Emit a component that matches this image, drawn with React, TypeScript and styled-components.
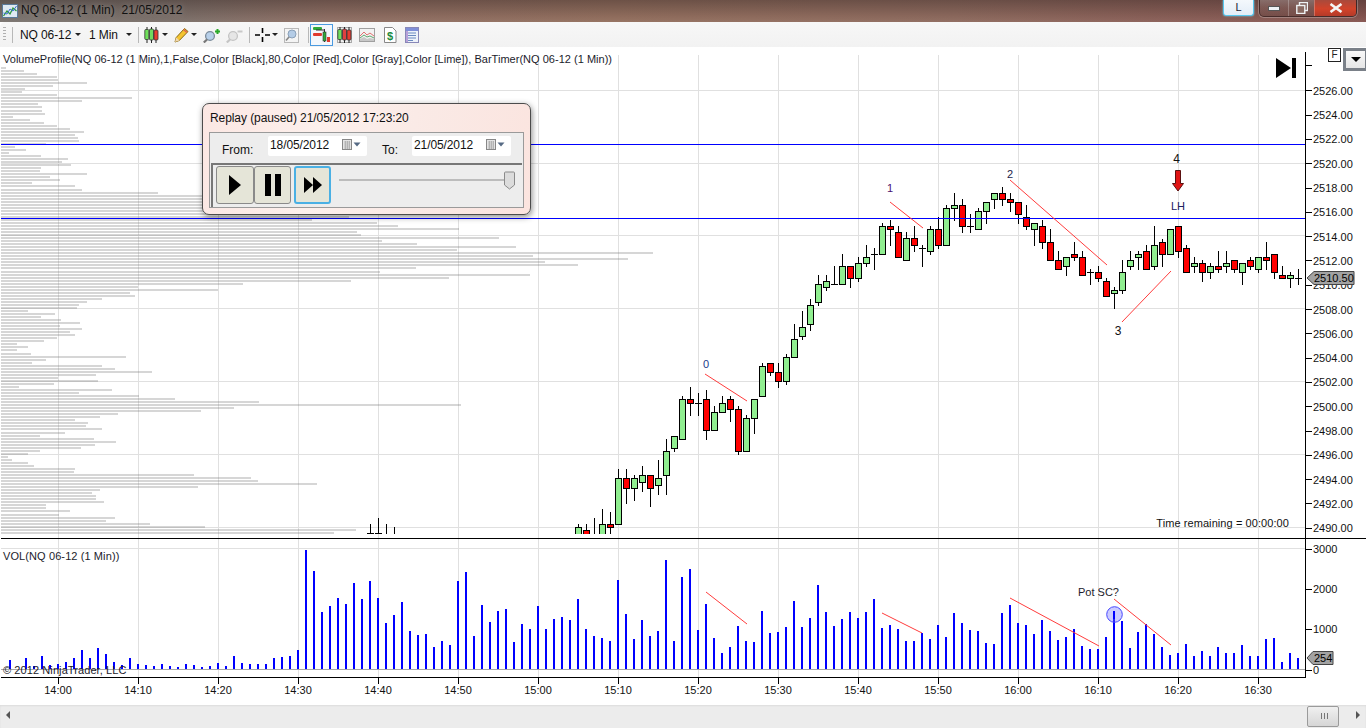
import React from "react";
import styled, { createGlobalStyle } from "styled-components";

const Global = createGlobalStyle`
  html, body { margin: 0; padding: 0; background: #fff; overflow: hidden; }
  #root { width: 1366px; height: 728px; }
  * { box-sizing: border-box; }
`;

const FONT = `"Liberation Sans", Arial, sans-serif`;

/* ---------- data ---------- */
type Candle = [number, number, number, number, number, "g" | "r" | "d"];
const candles: Candle[] = [
  [370,524,533,533,534,"d"],[378,518,533,533,534,"d"],[386,524,534,534,534,"d"],[394,527,534,534,534,"d"],
  [578,524,527,540,540,"g"],[586,524,530,540,540,"r"],[594,518,540,540,540,"d"],[602,509,524,540,540,"g"],
  [610,512,524,527,534,"r"],[618,469,478,524,524,"g"],[626,469,478,488,503,"r"],[634,475,478,488,500,"g"],
  [642,466,475,482,491,"g"],[650,475,475,488,506,"r"],[658,460,478,485,494,"g"],[666,439,451,475,494,"g"],
  [674,436,436,448,451,"g"],[682,396,399,439,439,"g"],[690,387,399,403,415,"r"],[698,393,403,403,415,"d"],
  [706,390,399,430,439,"r"],[714,406,412,430,430,"g"],[722,396,403,412,412,"g"],[730,396,399,409,421,"r"],
  [738,406,409,451,454,"r"],[746,415,418,451,451,"g"],[754,399,399,418,433,"g"],[762,363,366,396,396,"g"],
  [770,363,363,372,375,"r"],[778,363,372,381,387,"r"],[786,354,357,381,384,"g"],[794,324,339,357,357,"g"],
  [802,311,327,336,339,"g"],[810,299,305,324,330,"g"],[818,275,284,302,305,"g"],[826,275,281,287,290,"g"],
  [834,266,284,284,284,"d"],[842,254,266,284,284,"g"],[850,266,266,278,287,"r"],[858,257,263,278,281,"g"],
  [866,245,257,263,266,"g"],[874,248,254,254,269,"d"],[882,223,226,254,254,"g"],[890,220,226,229,245,"r"],
  [898,226,232,257,257,"r"],[906,232,238,260,260,"g"],[914,226,238,245,251,"r"],[922,245,248,248,266,"d"],
  [930,226,229,251,254,"g"],[938,217,229,245,248,"r"],[946,205,208,245,245,"g"],[954,193,205,208,220,"g"],
  [962,199,205,226,232,"r"],[970,214,226,226,232,"d"],[978,208,211,229,229,"g"],[986,202,202,211,223,"g"],
  [994,193,193,199,208,"g"],[1002,187,193,199,205,"r"],[1010,193,199,202,211,"r"],[1018,202,202,214,223,"r"],
  [1026,205,217,226,229,"r"],[1034,223,223,229,245,"g"],[1042,220,226,242,248,"r"],[1050,229,242,260,260,"r"],
  [1058,251,260,269,269,"r"],[1066,257,257,266,275,"g"],[1074,242,254,257,260,"r"],[1082,251,257,275,275,"r"],
  [1090,269,272,272,284,"d"],[1098,266,272,278,281,"r"],[1106,278,281,296,296,"r"],[1114,287,290,293,308,"g"],
  [1122,260,272,290,293,"g"],[1130,251,260,266,269,"g"],[1138,251,254,257,269,"g"],[1146,245,251,269,269,"r"],
  [1154,226,245,266,269,"g"],[1162,239,242,254,266,"r"],[1170,229,229,254,254,"g"],[1178,226,226,251,257,"r"],
  [1186,245,248,272,272,"r"],[1194,257,263,266,272,"g"],[1202,260,263,272,281,"r"],[1210,263,266,272,278,"g"],
  [1218,251,266,269,272,"r"],[1226,251,263,266,272,"g"],[1234,260,260,269,272,"r"],[1242,263,263,272,284,"g"],
  [1250,257,260,266,269,"r"],[1258,257,257,269,272,"g"],[1266,242,257,260,269,"r"],[1274,254,254,272,278,"r"],
  [1282,266,275,278,278,"r"],[1290,272,275,278,287,"g"],[1298,269,278,278,284,"d"],
];

// zoom-3 tops of the volume bars, from x = 10, every 8px; 418 = no bar
const volTops = [
  390,418,384,408,378,405,402,396,384,360,384,354,372,396,405,384,402,405,408,402,408,411,402,405,411,408,399,408,378,399,402,402,402,384,381,378,360,
  60,123,246,228,204,222,159,207,153,204,279,255,216,303,315,312,351,333,345,153,
  126,318,225,276,243,237,336,282,297,228,297,267,261,270,207,297,318,324,333,150,252,327,270,318,303,90,333,141,117,300,222,324,369,351,288,333,336,243,309,306,291,213,291,264,165,246,288,267,246,264,246,207,294,285,297,
  333,333,309,327,285,321,249,279,300,303,339,342,249,225,279,285,312,270,303,330,321,297,348,357,357,321,246,273,354,306,282,312,351,375,369,342,378,363,378,351,369,369,345,378,378,327,324,396,369,384,
];

const profile = [
  5,23,36,56,57,86,52,24,21,56,131,81,37,41,41,44,12,29,43,56,69,83,74,77,78,45,14,25,8,40,67,61,70,40,39,86,49,59,31,74,81,157,
  400,400,400,400,400,400,400,348,311,376,397,458,356,360,498,381,416,515,456,652,532,627,544,577,415,379,529,448,350,242,137,217,129,134,101,
  86,78,76,27,54,40,60,79,59,81,69,74,56,43,16,27,16,30,125,45,31,101,114,151,95,57,97,53,18,111,78,138,174,258,460,233,200,117,99,74,87,85,101,64,39,93,115,94,80,39,27,7,11,27,33,74,73,193,250,257,316,197,99,91,95,95,103,45,45,69,58,114,105,149,204,355,333,
];

const gridXs = Array.from({ length: 16 }, (_, i) => 58 + i * 80);
const timeLabels = ["14:00","14:10","14:20","14:30","14:40","14:50","15:00","15:10","15:20","15:30","15:40","15:50","16:00","16:10","16:20","16:30"];
const priceY = (p: number) => Math.round(90.3 + (2526 - p) * 12.15);
const priceBase = (p: number) => Math.round(94.8 + (2526 - p) * 12.15);
const priceTicks = Array.from({ length: 19 }, (_, i) => 2526 - i * 2);

/* ---------- shell ---------- */
const Page = styled.div`
  width: 1366px; height: 728px; display: flex; flex-direction: column;
  font-family: ${FONT}; background: #fff; color: #111;
`;

const TitleBar = styled.header`
  height: 22px; display: flex; align-items: flex-start; flex: none; padding-left: 2px;
  background:
    linear-gradient(180deg, rgba(50,36,34,.4) 0, rgba(50,36,34,.08) 70%, rgba(255,255,255,.03) 100%),
    linear-gradient(90deg, #7b7570 0, #7b706a 12%, #8f6f64 24%, #94705f 45%, #8f6b5f 70%, #8a5e57 88%, #865550 100%);
`;
const TitleIcon = styled.svg` width: 16px; height: 16px; margin-top: 3px; flex: none; `;
const TitleText = styled.span`
  margin-left: 3px; line-height: 21px; font-size: 12px; color: #111; white-space: pre; letter-spacing: .07px;
  text-shadow: 0 0 6px rgba(255,255,255,.35);
`;
const TitleActions = styled.div` margin-left: auto; display: flex; align-items: flex-start; padding-right: 9px; `;
const ModeButton = styled.div`
  width: 31px; height: 16px; margin-right: 5px; background: linear-gradient(#f4f8fc, #e3edf8);
  border: 1px solid #58c8ee; border-top: none; border-radius: 0 0 3px 3px;
  box-shadow: 0 0 2px #7fdcff; font-size: 11px; line-height: 14px; text-align: center; color: #223;
`;
const WinGroup = styled.div`
  display: flex; height: 17px; border: 1px solid rgba(50,30,30,.75); border-top: none;
  border-radius: 0 0 5px 5px; overflow: hidden; box-shadow: 0 0 0 1px rgba(255,255,255,.25);
`;
const WinBtn = styled.div<{ $w: number; $close?: boolean }>`
  width: ${p => p.$w}px; display: flex; align-items: center; justify-content: center;
  border-left: 1px solid rgba(255,255,255,.25);
  background: ${p => p.$close
    ? "linear-gradient(#a84a3c, #d2432a 55%, #b53a28)"
    : "linear-gradient(rgba(255,255,255,.22), rgba(255,255,255,.06) 50%, rgba(60,40,40,.18))"};
  &:first-child { border-left: none; }
`;

const Toolbar = styled.nav`
  height: 25px; flex: none; display: flex; align-items: center; padding-left: 3px;
  background: linear-gradient(#f7f7f7, #f2f2f2); border-top-left-radius: 5px; font-size: 12px; color: #111;
`;
const Grip = styled.div`
  width: 3px; height: 15px; flex: none;
  background: repeating-linear-gradient(180deg, #b0b0b0 0 1px, transparent 1px 3px);
`;
const Sep = styled.div<{ $before: number; $after: number }>`
  width: 1px; height: 16px; flex: none; background: #b8b8b8;
  margin: 0 ${p => p.$after}px 0 ${p => p.$before}px;
`;
const TbLabel = styled.span<{ $w: number }>`
  width: ${p => p.$w}px; flex: none; white-space: nowrap; letter-spacing: -.1px;
`;
const Caret = styled.i<{ $l: number; $r: number }>`
  width: 0; height: 0; flex: none; margin: 0 ${p => p.$r}px 0 ${p => p.$l}px;
  border-left: 3px solid transparent; border-right: 3px solid transparent; border-top: 3px solid #222;
`;
const ToolIcon = styled.svg<{ $w: number; $r?: number }>`
  width: ${p => p.$w}px; height: 16px; flex: none; margin-right: ${p => p.$r ?? 0}px;
`;
const ActiveTool = styled.div`
  width: 23px; height: 22px; flex: none; display: flex; align-items: center; justify-content: center;
  margin-right: 4px; border: 1px solid #4a9ae0; background: #f3f7fc;
`;

/* ---------- chart ---------- */
const ChartArea = styled.main` position: relative; height: 658px; flex: none; display: flex; flex-direction: column; overflow: hidden; background: #fff; `;
const Panel = styled.svg<{ $h: number }>`
  display: block; width: 1366px; height: ${p => p.$h}px; flex: none; font-family: ${FONT}; font-size: 11px;
`;
const Legend = styled.div<{ $top: number; $sp?: number }>`
  position: absolute; left: 3px; top: ${p => p.$top}px; letter-spacing: ${p => p.$sp ?? 0}px;
  font-size: 11px; line-height: 13px; color: #1c1c2c; white-space: nowrap;
`;
const TimeRemaining = styled.div`
  position: absolute; right: 77px; top: 469px; font-size: 11px; line-height: 14px; color: #111; letter-spacing: .08px; white-space: nowrap;
`;
const FBox = styled.div`
  position: absolute; left: 1328px; top: 1px; width: 13px; height: 14px; border: 1px solid #222;
  background: #fff; font-size: 10px; line-height: 12px; text-align: center; color: #222;
`;
const MenuBtn = styled.div`
  position: absolute; left: 1343px; top: 1px; width: 23px; height: 23px; border: 3px solid #7a8088;
  border-right-width: 1px; background: linear-gradient(#f8f8f8, #e6e6e6); display: flex; justify-content: center; padding-top: 6px;
  &::after { content: ""; width: 0; height: 0; border-left: 5px solid transparent; border-right: 5px solid transparent; border-top: 5px solid #000; }
`;

/* ---------- replay dialog ---------- */
const Dialog = styled.section`
  position: absolute; left: 202px; top: 56px; width: 329px; height: 112px; padding: 6px 6px 6px 6px;
  border: 1px solid #4c4c4c; border-radius: 7px;
  background: linear-gradient(100deg, #fbe7e3 0, #fdf0ec 35%, #faeae6 62%, #fbe4df 100%);
  box-shadow: 1px 2px 6px rgba(0,0,0,.45); display: flex; flex-direction: column;
`;
const DialogTitle = styled.div` height: 22px; padding-left: 1px; font-size: 12px; line-height: 16px; color: #111; white-space: nowrap; letter-spacing: -.08px; `;
const DialogBody = styled.div`
  flex: 1; border: 1px solid #9a9a9a; background: #ededed; display: flex; flex-direction: column; padding: 0 1px;
`;
const DateRow = styled.div` height: 30px; flex: none; display: flex; align-items: flex-start; padding-top: 3px; font-size: 12px; color: #111; `;
const DateLabel = styled.span<{ $w: number; $l: number }>` width: ${p => p.$w}px; margin-left: ${p => p.$l}px; padding-top: 7px; flex: none; `;
const DateField = styled.div`
  width: 99px; height: 20px; background: #fff; border-radius: 2px; display: flex; align-items: center; padding: 0 6px 2px 2px; flex: none;
`;
const DateValue = styled.span` flex: 1; font-size: 12px; letter-spacing: -.1px; `;
const CalIcon = styled.svg` width: 19px; height: 12px; flex: none; `;
const ControlRow = styled.div`
  flex: 1; border-top: 2px solid #777; border-left: 2px solid #777; display: flex; align-items: flex-start; padding: 1px 0 0 3px;
`;
const PlayerBtn = styled.button<{ $w: number; $focus?: boolean; $r?: number }>`
  width: ${p => p.$w}px; height: 38px; flex: none; margin: 0 ${p => p.$r ?? 0}px 0 0; padding: 0;
  display: flex; align-items: center; justify-content: center; background: #e5e5d8; border-radius: 3px;
  border: ${p => p.$focus ? "2px solid #4ab0e4" : "1px solid #8a8a8a"};
`;
const SliderWrap = styled.div` position: relative; width: 176px; height: 38px; margin-left: 8px; flex: none; `;
const SliderTrack = styled.div` position: absolute; left: 0; right: 5px; top: 13px; height: 2px; background: #bcbcbc; `;
const SliderThumb = styled.svg` position: absolute; right: 0; top: 5px; width: 11px; height: 19px; `;

/* ---------- footer ---------- */
const ScrollBar = styled.footer`
  height: 23px; flex: none; display: flex; align-items: center; background: #ececec;
  box-shadow: inset 0 1px 2px rgba(0,0,0,.07); position: relative; padding: 0 6px;
`;
const ArrowL = styled.i` width: 0; height: 0; border-right: 4px solid #555; border-top: 4px solid transparent; border-bottom: 4px solid transparent; margin-top: -4px; `;
const ArrowR = styled.i` width: 0; height: 0; border-left: 4px solid #555; border-top: 4px solid transparent; border-bottom: 4px solid transparent; margin-left: 17px; margin-top: -4px; `;
const Thumb = styled.div`
  margin-left: auto; width: 32px; height: 21px; background: linear-gradient(#f0f0f0, #d6d6d6);
  border: 1px solid #9a9a9a; border-radius: 2px; display: flex; align-items: center; justify-content: center; gap: 2px; margin-top: -1px;
  &::before, &::after { content: ""; width: 1px; height: 6px; background: #777; box-shadow: 3px 0 0 #777; }
`;

/* ---------- chart parts ---------- */
const Grid = ({ top, bottom }: { top: number; bottom: number }) => (
  <g fill="#e0e0e0">{gridXs.map(x => <rect key={x} x={x} y={top} width={1} height={bottom - top} />)}</g>
);

const CandleMark = ({ c }: { c: Candle }) => {
  const [x, top, bt, bb, bot, kind] = c;
  if (kind === "d") {
    return (
      <g fill="#000">
        <rect x={x} y={top} width={1} height={bot - top + 1} />
        <rect x={x - 3} y={bt} width={7} height={1} />
      </g>
    );
  }
  return (
    <g>
      <rect x={x} y={top} width={1} height={bot - top + 1} fill="#000" />
      <rect x={x - 2.5} y={bt + 0.5} width={6} height={bb - bt} fill={kind === "g" ? "#90ee90" : "#ff0000"} stroke="#000" strokeWidth={1} />
    </g>
  );
};

const RedLine = ({ d }: { d: [number, number, number, number] }) => (
  <line x1={d[0]} y1={d[1]} x2={d[2]} y2={d[3]} stroke="#ff3c3c" strokeWidth={1} />
);

const PricePanel = () => (
  <Panel $h={492} viewBox="0 47 1366 492">
    <defs><clipPath id="plot"><rect x="1" y="52" width="1304" height="482" /></clipPath></defs>
    <Grid top={55} bottom={538} />
    <g fill="#e0e0e0">
      {[90, 163, 235, 308, 381, 454, 527].map(y => <rect key={y} x={1} y={y} width={1304} height={1} />)}
    </g>
    <g fill="#787878" fillOpacity={0.3}>
      {profile.map((w, i) => <rect key={i} x={1} y={Math.floor(67.5 + i * 3.0375)} width={w} height={2} />)}
    </g>
    <g clipPath="url(#plot)">{candles.map(c => <CandleMark key={c[0]} c={c} />)}</g>
    <rect x={1} y={144} width={1304} height={1} fill="#0000ff" />
    <rect x={1} y={218} width={1304} height={1} fill="#0000ff" />
    <RedLine d={[705, 374, 747, 401]} />
    <RedLine d={[890, 202, 923, 228]} />
    <RedLine d={[1010, 180, 1107, 265]} />
    <RedLine d={[1122, 322, 1171, 271]} />
    <text x={706} y={368} textAnchor="middle" fill="#1a3a8a" fontSize={11}>0</text>
    <text x={890} y={192} textAnchor="middle" fill="#4a1070" fontSize={11}>1</text>
    <text x={1010} y={178} textAnchor="middle" fill="#22224a" fontSize={11}>2</text>
    <text x={1118} y={335} textAnchor="middle" fill="#111" fontSize={12}>3</text>
    <text x={1176.500} y={163} textAnchor="middle" fill="#111" fontSize={12}>4</text>
    <text x={1178} y={210} textAnchor="middle" fill="#202060" fontSize={11}>LH</text>
    <path d="M1175.5 170.5h5v13h3l-5.5 7.5l-5.5-7.5h3z" fill="#e01414" stroke="#5a1010" />
    <path d="M1276 58v20l15-10z M1292 58h4v20h-4z" fill="#000" />
    <rect x={1305} y={52} width={1} height={486} fill="#000" />
    <rect x={1305} y={65} width={7} height={1} fill="#000" />
    {priceTicks.map(p => (
      <g key={p}>
        <rect x={1305} y={priceY(p)} width={7} height={1} fill="#000" />
        <text x={1313} y={priceBase(p)} fill="#111">{p.toFixed(2)}</text>
      </g>
    ))}
    <path d="M1307 278l7-6.5h40v13h-40z" fill="#a2a2a2" stroke="#444" />
    <text x={1314} y={282} fill="#000" fontSize={11}>2510.50</text>
    <rect x={1} y={538} width={1365} height={1} fill="#000" />
  </Panel>
);

const VolumePanel = () => (
  <Panel $h={166} viewBox="0 539 1366 166">
    <Grid top={539} bottom={677} />
    <rect x={1} y={548} width={1304} height={1} fill="#e0e0e0" />
    <g fill="#0000ff">
      {volTops.map((t, i) => {
        if (t >= 418) return null;
        const top = 530 + t / 3;
        return <rect key={i} x={9 + i * 8} y={top} width={2} height={669 - top} />;
      })}
    </g>
    <rect x={1} y={669} width={1304} height={1} fill="#a8a8a8" />
    <circle cx={1114.5} cy={614.5} r={7.8} fill="#6a6aff" fillOpacity={0.35} stroke="#4848ff" />
    <rect x={1113} y={611} width={2} height={8} fill="#0000ff" />
    <RedLine d={[706, 592, 747, 624]} />
    <RedLine d={[882, 613, 922, 633]} />
    <RedLine d={[1010, 598, 1099, 646]} />
    <RedLine d={[1114, 599, 1171, 645]} />
    <text x={1078} y={596} fill="#1c1c2c">Pot SC?</text>
    <rect x={1} y={677} width={1305} height={1} fill="#000" />
    <rect x={1305} y={539} width={1} height={139} fill="#000" />
    {[[3000, 549], [2000, 589], [1000, 629], [0, 670]].map(([v, y]) => (
      <g key={v}>
        <rect x={1305} y={y} width={7} height={1} fill="#000" />
        <text x={1313} y={y + 4} fill="#111">{v}</text>
      </g>
    ))}
    <path d="M1307 658l6-6.5h20v13h-20z" fill="#a2a2a2" stroke="#444" />
    <text x={1314} y={662} fill="#000" fontSize={11}>254</text>
    {gridXs.map((x, i) => (
      <g key={x}>
        <rect x={x} y={678} width={1} height={6} fill="#000" />
        <text x={x} y={694} textAnchor="middle" fill="#111">{timeLabels[i]}</text>
      </g>
    ))}
  </Panel>
);

const Cal = () => (
  <CalIcon viewBox="0 0 19 12">
    <rect x=".5" y=".5" width="9" height="10" fill="#e4e4e4" stroke="#888" />
    <path d="M2 3h6M2 5h6M2 7h6M2 9h6M3.5 2v8M5.5 2v8M7.5 2v8" stroke="#a8a8a8" strokeWidth=".7" />
    <path d="M11.5 3.5h7l-3.5 4z" fill="#566a84" />
  </CalIcon>
);

const CandleIcon = ({ dark }: { dark?: boolean }) => (
  <>
    <path d="M3 0v16M7.5 0v16M12 0v16" stroke="#222" strokeWidth={1} />
    <rect x=".8" y="2.5" width="4" height="10" rx="1" fill="#6fe05a" stroke="#333" strokeWidth=".8" />
    <rect x="5.5" y="2" width="4" height="11" rx="1" fill={dark ? "#e04040" : "#70d860"} stroke="#333" strokeWidth=".8" />
    <rect x="10" y="3" width="4" height="10" rx="1" fill="#e83a30" stroke="#333" strokeWidth=".8" />
  </>
);

export default function App() {
  return (
    <Page>
      <Global />
      <TitleBar>
        <TitleIcon viewBox="0 0 16 16">
          <rect x=".5" y="1.5" width="15" height="13" fill="#dfe9f2" stroke="#5a7a9a" />
          <path d="M1.5 13L5 8l3 3 3-6 3.5 3" fill="none" stroke="#2e9a3c" strokeWidth="1.3" />
          <path d="M1.5 10L5 11l3-5 3 2 3.5-5" fill="none" stroke="#3a6fd0" strokeWidth="1" />
        </TitleIcon>
        <TitleText>NQ 06-12 (1 Min)  21/05/2012</TitleText>
        <TitleActions>
          <ModeButton>L</ModeButton>
          <WinGroup>
            <WinBtn $w={28}><svg width="12" height="5"><rect x=".5" y=".5" width="11" height="4" fill="#eef2f4" stroke="#555" /></svg></WinBtn>
            <WinBtn $w={26}><svg width="12" height="12"><rect x="3.5" y=".5" width="8" height="8" fill="none" stroke="#eef2f4" strokeWidth="1.4" /><rect x=".8" y="3.5" width="8" height="8" fill="#8a6a62" stroke="#eef2f4" strokeWidth="1.4" /></svg></WinBtn>
            <WinBtn $w={42} $close><svg width="14" height="10"><path d="M1.5 1l11 8M12.5 1l-11 8" stroke="#f4f4f4" strokeWidth="2.6" /></svg></WinBtn>
          </WinGroup>
        </TitleActions>
      </TitleBar>

      <Toolbar>
        <Grip />
        <Sep $before={6} $after={7} />
        <TbLabel $w={55}>NQ 06-12</TbLabel>
        <Caret $l={0} $r={8} />
        <TbLabel $w={36}>1 Min</TbLabel>
        <Caret $l={1} $r={6} />
        <Sep $before={0} $after={5} />
        <ToolIcon $w={15} viewBox="0 0 15 16"><CandleIcon /></ToolIcon>
        <Caret $l={3} $r={6} />
        <ToolIcon $w={15} viewBox="0 0 15 16">
          <path d="M1 15l1.2-4.5L10.5 1.5l3.5 3-8.7 9z" fill="#f4c430" stroke="#8a6a10" />
          <path d="M1 15l1.2-4.5 3.2 3z" fill="#f0d8b0" />
          <path d="M9.5 2.5l3.5 3" stroke="#e06050" strokeWidth="1.5" />
        </ToolIcon>
        <Caret $l={2} $r={6} />
        <ToolIcon $w={17} $r={6} viewBox="0 0 17 16">
          <circle cx="7" cy="9" r="4.4" fill="#b8d0ea" stroke="#7a8a9a" strokeWidth="1.3" />
          <path d="M4 12.5L.8 15.5" stroke="#777" strokeWidth="2.2" />
          <path d="M12 4.5h5M14.5 2v5" stroke="#28a828" strokeWidth="2" />
        </ToolIcon>
        <ToolIcon $w={17} viewBox="0 0 17 16">
          <circle cx="7" cy="9" r="4.4" fill="#e6e6e6" stroke="#c4c4c4" strokeWidth="1.3" />
          <path d="M4 12.5L.8 15.5" stroke="#c4c4c4" strokeWidth="2.2" />
          <path d="M11.5 4.5h5" stroke="#c8c8c8" strokeWidth="2" />
        </ToolIcon>
        <Sep $before={6} $after={5} />
        <ToolIcon $w={15} viewBox="0 0 15 16">
          <path d="M7.5 1v5M7.5 10v5M0 8h5M10 8h5" stroke="#000" strokeWidth="1.6" />
        </ToolIcon>
        <Caret $l={2} $r={6} />
        <ToolIcon $w={15} viewBox="0 0 15 16">
          <rect x=".5" y="1.5" width="14" height="14" fill="#f4f4f4" stroke="#b8b8b8" />
          <circle cx="8" cy="7" r="4" fill="#b4cce6" stroke="#8aa0b8" />
          <path d="M5 10l-3 3.5" stroke="#888" strokeWidth="1.6" />
        </ToolIcon>
        <Sep $before={9} $after={1} />
        <ActiveTool>
          <svg width="17" height="17" viewBox="0 0 17 17">
            <rect x="0" y="1" width="9" height="3" rx="1" fill="#2faa3a" />
            <rect x="0" y="7" width="9" height="3" rx="1" fill="#e03a30" />
            <path d="M11.5 3v13M3 4h8" stroke="#333" strokeWidth="1" />
            <rect x="10" y="6" width="3" height="9" fill="#2faa3a" stroke="#333" strokeWidth=".6" />
            <rect x="14" y="11" width="3" height="5" fill="#e03a30" />
          </svg>
        </ActiveTool>
        <ToolIcon $w={15} $r={7} viewBox="0 0 15 16"><rect x=".5" y=".5" width="14" height="15" fill="#f0f0f0" stroke="#aaa" /><CandleIcon dark /></ToolIcon>
        <ToolIcon $w={16} $r={8} viewBox="0 0 16 16">
          <rect x=".5" y="1.5" width="15" height="13" fill="#f2f2f2" stroke="#a0a0a0" />
          <path d="M1 9l4-4 3 3 3-2 4 3" fill="none" stroke="#e07070" />
          <path d="M1 11l4-3 3 2 3-1 4 2" fill="none" stroke="#60a870" />
          <path d="M1 14V12l4-2 3 2 3-1 4 1v2z" fill="#c8c8c8" />
        </ToolIcon>
        <ToolIcon $w={14} $r={8} viewBox="0 0 14 16">
          <path d="M1.5 .5h8l3.5 3.500v11.500h-11.500z" fill="#fff" stroke="#888" />
          <text x="7" y="13" textAnchor="middle" fontSize="11" fontWeight="700" fill="#1a8a3a" fontFamily={FONT}>$</text>
        </ToolIcon>
        <ToolIcon $w={14} viewBox="0 0 14 16">
          <rect x=".5" y=".5" width="13" height="15" fill="#eef2fa" stroke="#8888b8" />
          <rect x="1" y="1" width="12" height="3" fill="#7f8fd8" />
          <path d="M3 6h8M3 8.500h8M3 11h8M3 13.500h5" stroke="#6a8ac0" />
          <rect x="1" y="4" width="2" height="11" fill="#b8a0d8" />
        </ToolIcon>
      </Toolbar>

      <ChartArea>
        <PricePanel />
        <VolumePanel />
        <Legend $top={6} $sp={0.02}>VolumeProfile(NQ 06-12 (1 Min),1,False,Color [Black],80,Color [Red],Color [Gray],Color [Lime]), BarTimer(NQ 06-12 (1 Min))</Legend>
        <TimeRemaining>Time remaining = 00:00:00</TimeRemaining>
        <Legend $top={503} $sp={0.1}>VOL(NQ 06-12 (1 Min))</Legend>
        <Legend $top={617} $sp={0.09}>© 2012 NinjaTrader, LLC</Legend>
        <FBox>F</FBox>
        <MenuBtn />
        <Dialog>
          <DialogTitle>Replay (paused) 21/05/2012 17:23:20</DialogTitle>
          <DialogBody>
            <DateRow>
              <DateLabel $w={46} $l={11}>From:</DateLabel>
              <DateField><DateValue>18/05/2012</DateValue><Cal /></DateField>
              <DateLabel $w={30} $l={15}>To:</DateLabel>
              <DateField><DateValue>21/05/2012</DateValue><Cal /></DateField>
            </DateRow>
            <ControlRow>
              <PlayerBtn $w={38} $r={0}><svg width="12" height="20"><path d="M0 0l12 10L0 20z" fill="#000" /></svg></PlayerBtn>
              <PlayerBtn $w={37} $r={3}><svg width="16" height="22"><path d="M0 0h6v22H0zM10 0h6v22h-6z" fill="#000" /></svg></PlayerBtn>
              <PlayerBtn $w={37} $focus><svg width="18" height="16"><path d="M0 0l9 8L0 16zM9 0l9 8-9 8z" fill="#000" /></svg></PlayerBtn>
              <SliderWrap>
                <SliderTrack />
                <SliderThumb viewBox="0 0 11 19"><path d="M1.500 1h8a1 1 0 0 1 1 1v12l-5 4-5-4V2a1 1 0 0 1 1-1z" fill="#dcdcdc" stroke="#8a8a8a" /></SliderThumb>
              </SliderWrap>
            </ControlRow>
          </DialogBody>
        </Dialog>
      </ChartArea>

      <ScrollBar>
        <ArrowL />
        <Thumb />
        <ArrowR />
      </ScrollBar>
    </Page>
  );
}
